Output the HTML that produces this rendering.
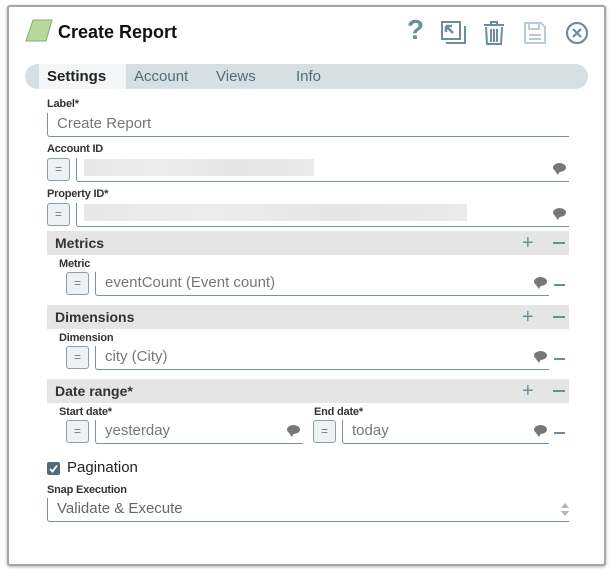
<!DOCTYPE html>
<html><head><style>
*{margin:0;padding:0;box-sizing:border-box}
body{width:613px;height:569px;background:#fff;font-family:"Liberation Sans",sans-serif;position:relative;overflow:hidden}
.dlg{position:absolute;left:7px;top:5px;width:599px;height:561px;border:2px solid #a6a6a6;border-radius:3px;box-shadow:0 1px 3px rgba(0,0,0,.3);background:#fff}
.a{position:absolute}
.lbl{position:absolute;font-size:11px;color:#333;font-weight:bold;letter-spacing:-.2px}
.inp{position:absolute;border-left:1px solid #7a929c;border-bottom:1px solid #7a929c;border-bottom-left-radius:3px;font-size:15px;color:#777;padding-left:9px;line-height:22px}
.eq{position:absolute;width:23px;height:23px;border:1px solid #8a9ea6;border-radius:3px;background:#eef2f4;color:#777;font-size:12px;text-align:center;line-height:21px}
.hdr{position:absolute;left:47px;width:522px;height:24px;background:#e5e5e5;font-size:14px;font-weight:bold;color:#333;padding-left:8px;line-height:24px}
.pl{position:absolute;color:#6a8e9c;font-size:20px;line-height:20px}
.mn{position:absolute;width:12px;height:2px;background:#6a8e9c}
.cm{position:absolute;width:13px;height:9px;background:#777;border-radius:50%}
.cm:after{content:"";position:absolute;left:2px;bottom:-3px;border-left:3px solid transparent;border-right:2px solid transparent;border-top:4px solid #777}
.blur{position:absolute;height:17px;background:linear-gradient(90deg,#e8e8e8,#ececec,#e6e6e6,#eaeaea)}
</style></head><body>
<div class="dlg"></div>
<svg class="a" style="left:25px;top:19px" width="28" height="24"><polygon points="8,1 27,1 21,22 1,22" fill="#b8d79a" stroke="#8aa878" stroke-width="1"/></svg>
<div class="a" style="left:58px;top:22px;font-size:18px;font-weight:bold;color:#111">Create Report</div>
<div class="a" style="left:407px;top:15px;font-size:28px;font-weight:bold;color:#6a8e9c;line-height:30px">?</div>
<svg class="a" style="left:441px;top:21px" width="26" height="24" fill="none" stroke="#6a8e9c" stroke-width="2"><rect x="1" y="1" width="18" height="17"/><path d="M5 22H24V5"/><path d="M5 5L12 12M5 5h6M5 5v6" stroke-width="2.5"/></svg>
<svg class="a" style="left:483px;top:20px" width="22" height="26" fill="none" stroke="#6a8e9c" stroke-width="2"><path d="M1 5H21M8 5V2H14V5M3 7L4 24H18L19 7M8 9V22M11 9V22M14 9V22"/></svg>
<svg class="a" style="left:524px;top:22px" width="22" height="22" fill="none" stroke="#b9ccd4" stroke-width="2"><path d="M1 1H17L21 5V21H1Z"/><path d="M5 1V7H15V1M5 13H17M5 17H17"/></svg>
<svg class="a" style="left:565px;top:21px" width="24" height="24" fill="none" stroke="#6a8e9c" stroke-width="2.2"><circle cx="12" cy="12" r="10"/><path d="M8 8L16 16M16 8L8 16"/></svg>
<div class="a" style="left:25px;top:64px;width:563px;height:25px;background:#d6dfe3;border-radius:13px"></div>
<div class="a" style="left:39px;top:64px;width:87px;height:25px;background:#f4f6f7"></div>
<div class="a" style="left:47px;top:68px;font-size:15px;font-weight:bold;color:#222">Settings</div>
<div class="a" style="left:134px;top:68px;font-size:15px;color:#4f6e7a">Account</div>
<div class="a" style="left:216px;top:68px;font-size:15px;color:#4f6e7a">Views</div>
<div class="a" style="left:296px;top:68px;font-size:15px;color:#4f6e7a">Info</div>

<div class="lbl" style="left:47px;top:98px">Label*</div>
<div class="inp" style="left:47px;top:113px;width:522px;height:24px">Create Report</div>
<div class="lbl" style="left:47px;top:143px">Account ID</div>
<div class="eq" style="left:47px;top:158px">=</div>
<div class="inp" style="left:76px;top:158px;width:493px;height:24px"></div>
<div class="blur" style="left:84px;top:159px;width:230px"></div>
<div class="cm" style="left:553px;top:163px"></div>
<div class="lbl" style="left:47px;top:188px">Property ID*</div>
<div class="eq" style="left:47px;top:203px">=</div>
<div class="inp" style="left:76px;top:203px;width:493px;height:24px"></div>
<div class="blur" style="left:84px;top:204px;width:383px"></div>
<div class="cm" style="left:553px;top:208px"></div>

<div class="hdr" style="top:231px">Metrics</div>
<div class="pl" style="left:522px;top:233px">+</div><div class="mn" style="left:553px;top:242px"></div>
<div class="lbl" style="left:59px;top:258px">Metric</div>
<div class="eq" style="left:66px;top:272px">=</div>
<div class="inp" style="left:95px;top:272px;width:454px;height:24px">eventCount (Event count)</div>
<div class="cm" style="left:534px;top:277px"></div><div class="mn" style="left:554px;top:284px;width:11px"></div>

<div class="hdr" style="top:305px">Dimensions</div>
<div class="pl" style="left:522px;top:307px">+</div><div class="mn" style="left:553px;top:316px"></div>
<div class="lbl" style="left:59px;top:332px">Dimension</div>
<div class="eq" style="left:66px;top:346px">=</div>
<div class="inp" style="left:95px;top:346px;width:454px;height:24px">city (City)</div>
<div class="cm" style="left:534px;top:351px"></div><div class="mn" style="left:554px;top:358px;width:11px"></div>

<div class="hdr" style="top:379px">Date range*</div>
<div class="pl" style="left:522px;top:381px">+</div><div class="mn" style="left:553px;top:390px"></div>
<div class="lbl" style="left:59px;top:406px">Start date*</div>
<div class="eq" style="left:66px;top:420px">=</div>
<div class="inp" style="left:95px;top:420px;width:208px;height:24px">yesterday</div>
<div class="cm" style="left:287px;top:425px"></div>
<div class="lbl" style="left:314px;top:406px">End date*</div>
<div class="eq" style="left:313px;top:420px">=</div>
<div class="inp" style="left:342px;top:420px;width:207px;height:24px">today</div>
<div class="cm" style="left:534px;top:425px"></div><div class="mn" style="left:554px;top:432px;width:11px"></div>

<div class="a" style="left:47px;top:462px;width:13px;height:13px;background:#4f6e7a;border-radius:2px"></div>
<svg class="a" style="left:47px;top:462px" width="13" height="13"><path d="M3 7L5.5 9.5L10 3.5" stroke="#fff" stroke-width="1.8" fill="none"/></svg>
<div class="a" style="left:67px;top:459px;font-size:15px;color:#222">Pagination</div>
<div class="lbl" style="left:47px;top:484px">Snap Execution</div>
<div class="inp" style="left:47px;top:498px;width:522px;height:24px;color:#666">Validate &amp; Execute</div>
<div class="a" style="left:561px;top:503px;width:0;height:0;border-left:4px solid transparent;border-right:4px solid transparent;border-bottom:5px solid #aab8bd"></div>
<div class="a" style="left:561px;top:511px;width:0;height:0;border-left:4px solid transparent;border-right:4px solid transparent;border-top:5px solid #aab8bd"></div>
</body></html>
